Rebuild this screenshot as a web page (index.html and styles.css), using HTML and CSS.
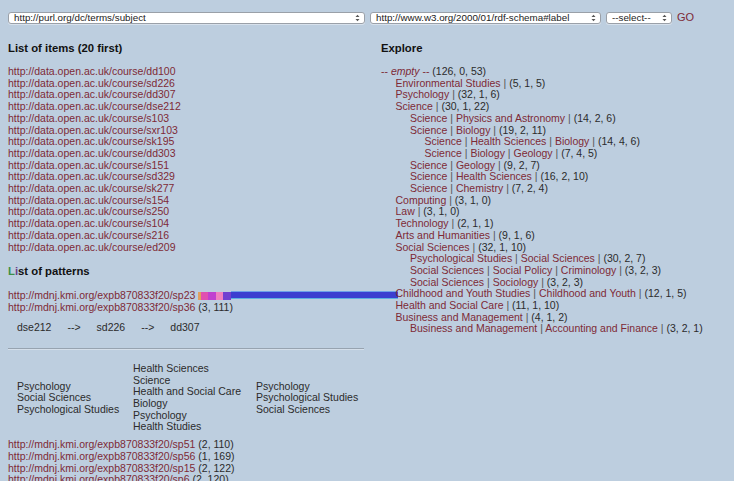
FILE: index.html
```html
<!DOCTYPE html>
<html>
<head>
<meta charset="utf-8">
<link rel="stylesheet" href="styles.css">
</head>
<body>
<form class="topbar">
  <span class="sel sel-prop"><select><option>http://purl.org/dc/terms/subject</option></select><svg class="arrows" width="5" height="8" viewBox="0 0 5 8"><path d="M0.5 3 L2.5 0.8 L4.5 3 Z M0.5 5 L2.5 7.2 L4.5 5 Z" fill="#555"/></svg></span>
  <span class="sel sel-label"><select><option>http://www.w3.org/2000/01/rdf-schema#label</option></select><svg class="arrows" width="5" height="8" viewBox="0 0 5 8"><path d="M0.5 3 L2.5 0.8 L4.5 3 Z M0.5 5 L2.5 7.2 L4.5 5 Z" fill="#555"/></svg></span>
  <span class="sel sel-small"><select><option>--select--</option></select><svg class="arrows" width="5" height="8" viewBox="0 0 5 8"><path d="M0.5 3 L2.5 0.8 L4.5 3 Z M0.5 5 L2.5 7.2 L4.5 5 Z" fill="#555"/></svg></span>
  <a class="go" href="#">GO</a>
</form>

<div class="main">
  <div class="left">
    <h3 class="heading">List of items (20 first)</h3>
    <ul class="items">
      <li><a href="#">http://data.open.ac.uk/course/dd100</a></li>
      <li><a href="#">http://data.open.ac.uk/course/sd226</a></li>
      <li><a href="#">http://data.open.ac.uk/course/dd307</a></li>
      <li><a href="#">http://data.open.ac.uk/course/dse212</a></li>
      <li><a href="#">http://data.open.ac.uk/course/s103</a></li>
      <li><a href="#">http://data.open.ac.uk/course/sxr103</a></li>
      <li><a href="#">http://data.open.ac.uk/course/sk195</a></li>
      <li><a href="#">http://data.open.ac.uk/course/dd303</a></li>
      <li><a href="#">http://data.open.ac.uk/course/s151</a></li>
      <li><a href="#">http://data.open.ac.uk/course/sd329</a></li>
      <li><a href="#">http://data.open.ac.uk/course/sk277</a></li>
      <li><a href="#">http://data.open.ac.uk/course/s154</a></li>
      <li><a href="#">http://data.open.ac.uk/course/s250</a></li>
      <li><a href="#">http://data.open.ac.uk/course/s104</a></li>
      <li><a href="#">http://data.open.ac.uk/course/s216</a></li>
      <li><a href="#">http://data.open.ac.uk/course/ed209</a></li>
    </ul>

    <h3 class="heading heading-patterns"><span class="gl-l">L</span><span class="gl-i">i</span>st of patterns</h3>
    <ul class="patterns">
      <li><a href="#">http://mdnj.kmi.org/expb870833f20/sp23</a> <span class="glitch"></span><span class="glitch-bar"></span></li>
      <li><a href="#">http://mdnj.kmi.org/expb870833f20/sp36</a> (3, 111)</li>
    </ul>
    <div class="sequence">
      <span>dse212</span><span>--&gt;</span><span>sd226</span><span>--&gt;</span><span>dd307</span>
    </div>
    <hr class="sep">
    <div class="cats">
      <div class="cat">Psychology<br>Social Sciences<br>Psychological Studies</div>
      <div class="cat">Health Sciences<br>Science<br>Health and Social Care<br>Biology<br>Psychology<br>Health Studies</div>
      <div class="cat">Psychology<br>Psychological Studies<br>Social Sciences</div>
    </div>
    <ul class="patterns more">
      <li><a href="#">http://mdnj.kmi.org/expb870833f20/sp51</a> (2, 110)</li>
      <li><a href="#">http://mdnj.kmi.org/expb870833f20/sp56</a> (1, 169)</li>
      <li><a href="#">http://mdnj.kmi.org/expb870833f20/sp15</a> (2, 122)</li>
      <li><a href="#">http://mdnj.kmi.org/expb870833f20/sp6</a> (2, 120)</li>
    </ul>
  </div>

  <div class="right">
    <h3 class="heading">Explore</h3>
    <ul class="tree">
      <li><a href="#">-- <em>empty</em> --</a> (126, 0, 53)
        <ul>
          <li><a href="#">Environmental Studies</a> <i class="p">|</i> (5, 1, 5)</li>
          <li><a href="#">Psychology</a> <i class="p">|</i> (32, 1, 6)</li>
          <li><a href="#">Science</a> <i class="p">|</i> (30, 1, 22)
            <ul>
              <li><a href="#">Science</a> <i class="p">|</i> <a href="#">Physics and Astronomy</a> <i class="p">|</i> (14, 2, 6)</li>
              <li><a href="#">Science</a> <i class="p">|</i> <a href="#">Biology</a> <i class="p">|</i> (19, 2, 11)
                <ul>
                  <li><a href="#">Science</a> <i class="p">|</i> <a href="#">Health Sciences</a> <i class="p">|</i> <a href="#">Biology</a> <i class="p">|</i> (14, 4, 6)</li>
                  <li><a href="#">Science</a> <i class="p">|</i> <a href="#">Biology</a> <i class="p">|</i> <a href="#">Geology</a> <i class="p">|</i> (7, 4, 5)</li>
                </ul>
              </li>
              <li><a href="#">Science</a> <i class="p">|</i> <a href="#">Geology</a> <i class="p">|</i> (9, 2, 7)</li>
              <li><a href="#">Science</a> <i class="p">|</i> <a href="#">Health Sciences</a> <i class="p">|</i> (16, 2, 10)</li>
              <li><a href="#">Science</a> <i class="p">|</i> <a href="#">Chemistry</a> <i class="p">|</i> (7, 2, 4)</li>
            </ul>
          </li>
          <li><a href="#">Computing</a> <i class="p">|</i> (3, 1, 0)</li>
          <li><a href="#">Law</a> <i class="p">|</i> (3, 1, 0)</li>
          <li><a href="#">Technology</a> <i class="p">|</i> (2, 1, 1)</li>
          <li><a href="#">Arts and Humanities</a> <i class="p">|</i> (9, 1, 6)</li>
          <li><a href="#">Social Sciences</a> <i class="p">|</i> (32, 1, 10)
            <ul>
              <li><a href="#">Psychological Studies</a> <i class="p">|</i> <a href="#">Social Sciences</a> <i class="p">|</i> (30, 2, 7)</li>
              <li><a href="#">Social Sciences</a> <i class="p">|</i> <a href="#">Social Policy</a> <i class="p">|</i> <a href="#">Criminology</a> <i class="p">|</i> (3, 2, 3)</li>
              <li><a href="#">Social Sciences</a> <i class="p">|</i> <a href="#">Sociology</a> <i class="p">|</i> (3, 2, 3)</li>
            </ul>
          </li>
          <li><a href="#">Childhood and Youth Studies</a> <i class="p">|</i> <a href="#">Childhood and Youth</a> <i class="p">|</i> (12, 1, 5)</li>
          <li><a href="#">Health and Social Care</a> <i class="p">|</i> (11, 1, 10)</li>
          <li><a href="#">Business and Management</a> <i class="p">|</i> (4, 1, 2)
            <ul>
              <li><a href="#">Business and Management</a> <i class="p">|</i> <a href="#">Accounting and Finance</a> <i class="p">|</i> (3, 2, 1)</li>
            </ul>
          </li>
        </ul>
      </li>
    </ul>
  </div>
</div>
<div class="bottom-strip"></div>
</body>
</html>
```

FILE: styles.css
```css
html, body {
  margin: 0;
  padding: 0;
  background: #bdcedf;
  height: 100%;
  overflow: hidden;
}
body {
  font-family: "Liberation Sans", Arial, sans-serif;
  font-size: 10.5px;
  line-height: 11.7px;
  color: #2b2b2b;
}
a {
  color: #7d2a36;
  text-decoration: none;
}
ul {
  list-style: none;
  margin: 0;
  padding: 0;
}

/* top bar */
.topbar {
  display: flex;
  align-items: center;
  padding: 12px 0 0 8px;
  margin: 0;
  height: 12px;
}
.sel {
  position: relative;
  display: block;
  height: 12px;
  margin-right: 5px;
}
.sel select {
  -webkit-appearance: none;
  appearance: none;
  display: block;
  box-sizing: border-box;
  width: 100%;
  height: 12px;
  margin: 0;
  padding: 0 0 0 5px;
  border: 1px solid #9aa0a8;
  border-radius: 3px;
  background: #fff;
  font-family: "Liberation Sans", Arial, sans-serif;
  font-size: 9.8px;
  line-height: 10px;
  color: #222;
  box-shadow: 0 1px 0 rgba(255,255,255,0.4);
}
.sel .arrows {
  position: absolute;
  right: 5px;
  top: 2px;
}
.sel-prop { width: 357px; }
.sel-label { width: 231px; }
.sel-small { width: 66px; }
.go {
  font-size: 11px;
  margin-left: 0;
  margin-top: -1px;
}

/* columns */
.main {
  display: grid;
  grid-template-columns: 357px 1fr;
  column-gap: 16px;
  padding-left: 8px;
}
.heading {
  margin: 17px 0 0;
  font-size: 11.3px;
  line-height: 14px;
  font-weight: bold;
  color: #111;
}
.items {
  margin-top: 11px;
}
.heading-patterns {
  margin-top: 11px;
}
.gl-l { color: #3c8f46; }
.gl-i { color: #6b3f8c; }
.patterns {
  margin-top: 12px;
  white-space: nowrap;
}
.glitch {
  display: inline-block;
  width: 33px;
  height: 8px;
  vertical-align: -1px;
  background: linear-gradient(90deg, #e0a060 0 8%, #e050b0 8% 30%, #c040d0 30% 55%, #f080c0 55% 75%, #7040d0 75%);
}
.glitch-bar {
  display: inline-block;
  width: 167px;
  height: 6px;
  vertical-align: 0;
  background: #3c3ed0;
  border-top: 1px solid #6fa0e8;
  border-bottom: 1px solid #5fb0e0;
}
.sequence {
  display: flex;
  gap: 16px;
  padding-left: 9px;
  margin-top: 8.6px;
}
.sep {
  margin: 14px 1px 0 0;
  border: 0;
  border-top: 1px solid #97a3b0;
  border-bottom: 1px solid #d5dfea;
  height: 0;
}
.cats {
  display: grid;
  grid-template-columns: 116px 123px auto;
  align-items: center;
  padding-left: 9px;
  margin-top: 13px;
}
.patterns.more {
  margin-top: 6px;
}

/* tree */
.tree {
  margin-top: 11px;
}
.tree ul {
  padding-left: 14.5px;
}
.tree li {
  white-space: nowrap;
}
.tree em {
  font-style: italic;
}
.p {
  font-style: normal;
  color: #555;
}

.bottom-strip {
  position: fixed;
  left: 0;
  right: 0;
  bottom: 0;
  height: 10px;
  background: #fff;
}
```
